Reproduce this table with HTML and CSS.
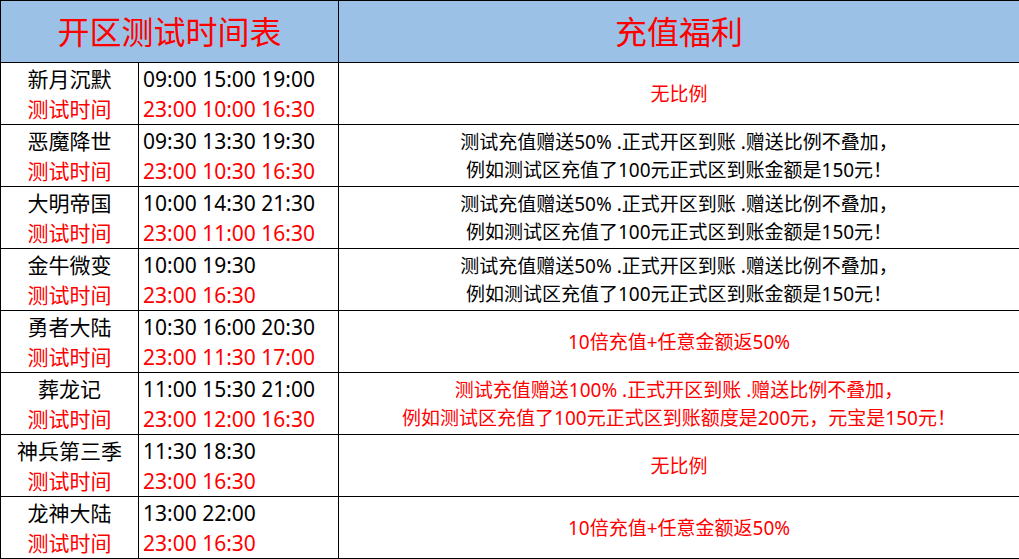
FILE: index.html
```html
<!DOCTYPE html>
<html lang="zh-CN">
<head>
<meta charset="utf-8">
<title>开区测试时间表</title>
<link rel="stylesheet" href="styles.css">
</head>
<body>
<table class="sheet">
  <colgroup>
    <col class="c-name">
    <col class="c-time">
    <col class="c-bonus">
  </colgroup>
  <thead>
    <tr class="head">
      <th colspan="2">开区测试时间表</th>
      <th>充值福利</th>
    </tr>
  </thead>
  <tbody>
    <tr>
      <td class="name"><div>新月沉默</div><div class="red">测试时间</div></td>
      <td class="time"><div>09:00 15:00 19:00</div><div class="red">23:00 10:00 16:30</div></td>
      <td class="bonus red">无比例</td>
    </tr>
    <tr>
      <td class="name"><div>恶魔降世</div><div class="red">测试时间</div></td>
      <td class="time"><div>09:30 13:30 19:30</div><div class="red">23:00 10:30 16:30</div></td>
      <td class="bonus"><div>测试充值赠送50% .正式开区到账 .赠送比例不叠加，</div><div>例如测试区充值了100元正式区到账金额是150元！</div></td>
    </tr>
    <tr>
      <td class="name"><div>大明帝国</div><div class="red">测试时间</div></td>
      <td class="time"><div>10:00 14:30 21:30</div><div class="red">23:00 11:00 16:30</div></td>
      <td class="bonus"><div>测试充值赠送50% .正式开区到账 .赠送比例不叠加，</div><div>例如测试区充值了100元正式区到账金额是150元！</div></td>
    </tr>
    <tr>
      <td class="name"><div>金牛微变</div><div class="red">测试时间</div></td>
      <td class="time"><div>10:00 19:30</div><div class="red">23:00 16:30</div></td>
      <td class="bonus"><div>测试充值赠送50% .正式开区到账 .赠送比例不叠加，</div><div>例如测试区充值了100元正式区到账金额是150元！</div></td>
    </tr>
    <tr>
      <td class="name"><div>勇者大陆</div><div class="red">测试时间</div></td>
      <td class="time"><div>10:30 16:00 20:30</div><div class="red">23:00 11:30 17:00</div></td>
      <td class="bonus red">10倍充值+任意金额返50%</td>
    </tr>
    <tr>
      <td class="name"><div>葬龙记</div><div class="red">测试时间</div></td>
      <td class="time"><div>11:00 15:30 21:00</div><div class="red">23:00 12:00 16:30</div></td>
      <td class="bonus red"><div>测试充值赠送100% .正式开区到账 .赠送比例不叠加，</div><div>例如测试区充值了100元正式区到账额度是200元，元宝是150元！</div></td>
    </tr>
    <tr>
      <td class="name"><div>神兵第三季</div><div class="red">测试时间</div></td>
      <td class="time"><div>11:30 18:30</div><div class="red">23:00 16:30</div></td>
      <td class="bonus red">无比例</td>
    </tr>
    <tr>
      <td class="name"><div>龙神大陆</div><div class="red">测试时间</div></td>
      <td class="time"><div>13:00 22:00</div><div class="red">23:00 16:30</div></td>
      <td class="bonus red">10倍充值+任意金额返50%</td>
    </tr>
  </tbody>
</table>
</body>
</html>
```
FILE: styles.css
```css
html, body {
  margin: 0;
  padding: 0;
  background: #ffffff;
}
body {
  font-family: "Noto Sans", "Noto Sans CJK SC", sans-serif;
  color: #000;
}
.sheet {
  border-collapse: collapse;
  table-layout: fixed;
  width: 1019px;
}
.c-name { width: 138px; }
.c-time { width: 200px; }
.c-bonus { width: 681px; }
.sheet th, .sheet td {
  border: 1px solid #000;
  padding: 0;
  vertical-align: middle;
}
.sheet tr { height: 62px; }
.head th {
  background: #9bc2e6;
  color: #ff0000;
  font-weight: normal;
  font-size: 32px;
  line-height: 40px;
  text-align: center;
}
.name {
  text-align: center;
  font-size: 21px;
  line-height: 30px;
}
.time {
  text-align: left;
  padding-left: 4px !important;
  font-size: 21px;
  line-height: 30px;
  white-space: nowrap;
}
.bonus {
  text-align: center;
  font-size: 19px;
  line-height: 28px;
  white-space: nowrap;
}
.red { color: #ff0000; }
```
